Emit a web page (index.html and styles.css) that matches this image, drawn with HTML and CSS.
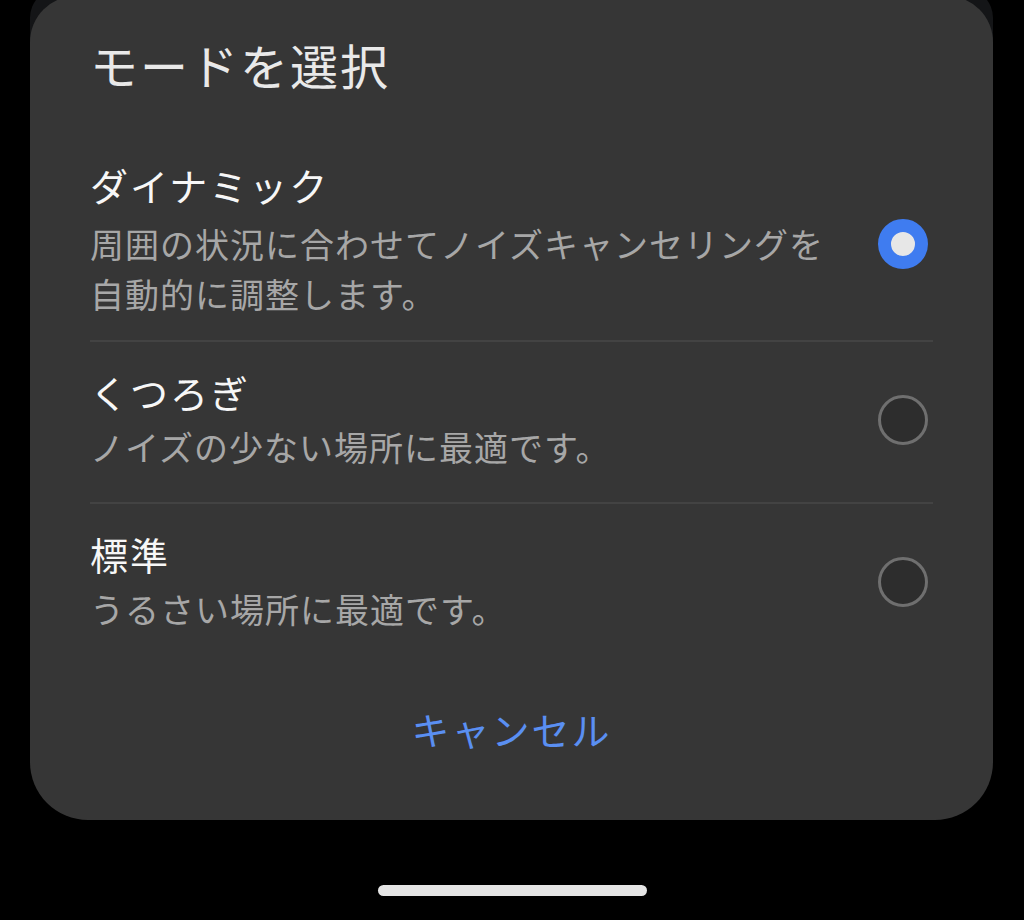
FILE: index.html
```html
<!DOCTYPE html>
<html lang="ja">
<head>
<meta charset="utf-8">
<title>モードを選択</title>
<link rel="stylesheet" href="styles.css">
</head>
<body>
<div class="screen">
  <div class="frame">
    <div class="card">
      <h1 class="title">モードを選択</h1>
      <div class="options">
        <div class="option option-multi">
          <div class="option-text">
            <div class="option-title">ダイナミック</div>
            <div class="option-desc">周囲の状況に合わせてノイズキャンセリングを<br>自動的に調整します。</div>
          </div>
          <span class="radio radio-on"></span>
        </div>
        <div class="option">
          <div class="option-text">
            <div class="option-title">くつろぎ</div>
            <div class="option-desc">ノイズの少ない場所に最適です。</div>
          </div>
          <span class="radio"></span>
        </div>
        <div class="option">
          <div class="option-text">
            <div class="option-title">標準</div>
            <div class="option-desc">うるさい場所に最適です。</div>
          </div>
          <span class="radio"></span>
        </div>
      </div>
      <div class="actions">
        <span class="cancel">キャンセル</span>
      </div>
    </div>
  </div>
  <div class="home-bar"></div>
</div>
</body>
</html>
```

FILE: styles.css
```css
html, body {
  margin: 0;
  padding: 0;
  background: #000;
}

body {
  width: 1024px;
  height: 920px;
  overflow: hidden;
  font-family: "Noto Sans CJK JP", "Noto Sans", sans-serif;
}

.screen {
  display: flex;
  flex-direction: column;
  height: 920px;
}

.frame {
  margin: -12px 31px 0 30px;
  padding-top: 8px;
  border-radius: 30px 30px 0 0;
  background: linear-gradient(#141517, #141517) top / 100% 80px no-repeat;
}

.card {
  background: #363636;
  border-radius: 46px 46px 58px 58px;
  padding: 40px 60px 0;
}

.title {
  margin: 0 0 38px;
  font-size: 48px;
  line-height: 56px;
  font-weight: 400;
  letter-spacing: 2px;
  color: #e9e9e9;
}

.options {
  display: flex;
  flex-direction: column;
}

.option {
  display: flex;
  align-items: center;
  gap: 20px;
  padding: 25px 0 30px;
  border-bottom: 2px solid #434343;
}

.option:last-child {
  border-bottom: none;
}

.option-text {
  flex: 1;
  display: flex;
  flex-direction: column;
  gap: 5px;
}

.option-multi {
  padding: 30px 0 21px;
}

.option-multi .option-text {
  gap: 9px;
}

.option-multi .radio {
  margin-top: 9px;
}

.option-title {
  font-size: 38px;
  line-height: 50px;
  letter-spacing: 2px;
  color: #f7f7f7;
}

.option-desc {
  font-size: 34px;
  line-height: 50px;
  letter-spacing: 1px;
  color: #a7a7a7;
}

.radio {
  flex: none;
  width: 50px;
  height: 50px;
  margin-right: 5px;
  box-sizing: border-box;
  border-radius: 50%;
  border: 3px solid #6f6f6f;
  background: #2d2d2d;
}

.radio-on {
  border: 13px solid #3f7cf0;
  background: #e7e7e7;
}

.actions {
  padding: 40px 0 66px;
  text-align: center;
}

.cancel {
  font-size: 38px;
  line-height: 50px;
  letter-spacing: 2px;
  color: #5a8ff2;
}

.home-bar {
  width: 269px;
  height: 11px;
  margin: 65px auto 0;
  border-radius: 6px;
  background: #e5e5e5;
}
```
